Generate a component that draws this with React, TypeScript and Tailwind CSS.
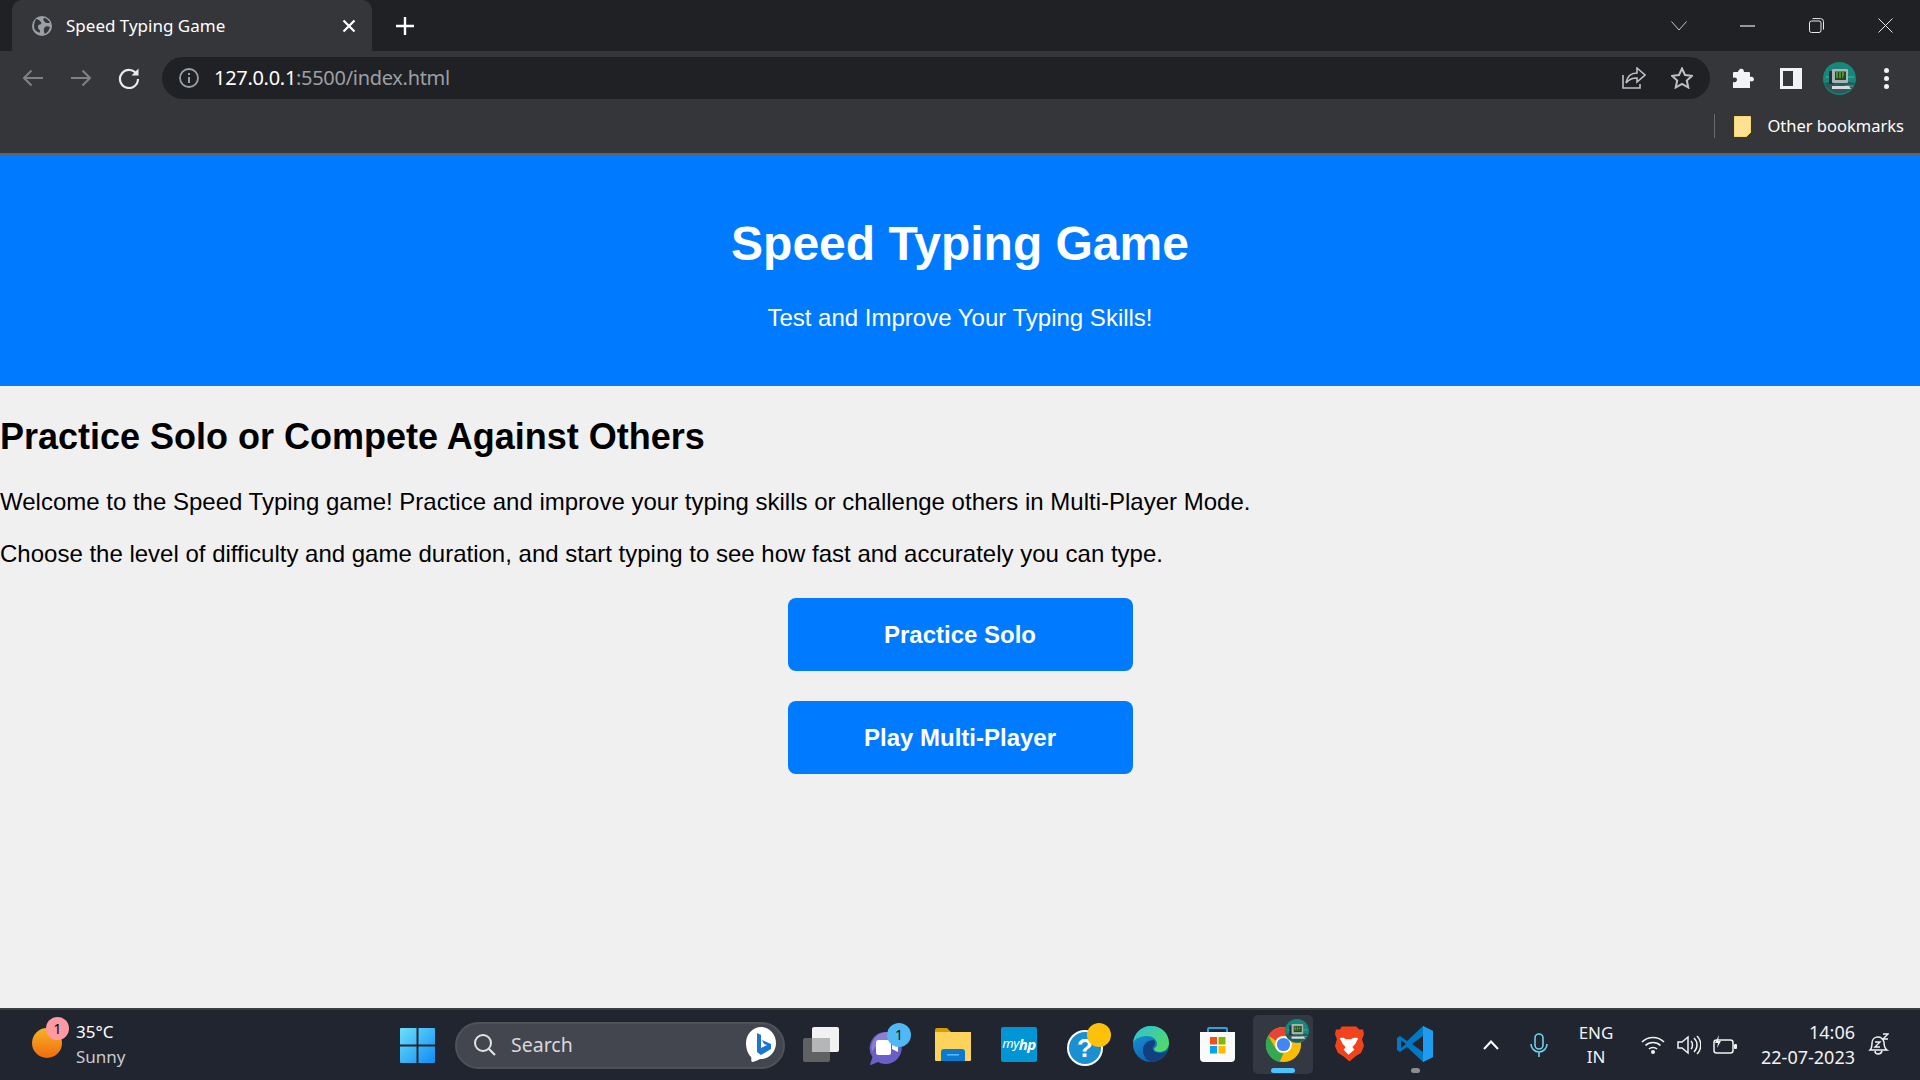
import React from "react";

const Globe = () => (
  <svg width="20" height="20" viewBox="0 0 20 20">
    <circle cx="10" cy="10" r="10" fill="#9aa0a6" />
    <path d="M4 3c2 0 3 1 4 2s2 2 1 3-3 0-3 3 2 2 2 4-1 2-2 1C3 15 2 13 2 10c0-3 1-5 2-7zM12 2c2 0 5 2 6 5h-3c-2 0-2-1-3-2s-1-2 0-3zM13 11c1-1 3-1 5 0-1 3-2 5-5 7-1-2-2-5 0-7z" fill="#35363a" />
  </svg>
);

const ChromeLogo = () => (
  <svg width="37" height="37" viewBox="0 0 38 38">
    <circle cx="19" cy="19" r="18" fill="#fbbc04" />
    <path d="M19 1a18 18 0 0 1 15.6 9H19a9 9 0 0 0-8 5L3.4 10A18 18 0 0 1 19 1z" fill="#ea4335" />
    <path d="M3.4 10 11 23a9 9 0 0 0 8 5l-4 9A18 18 0 0 1 3.4 10z" fill="#34a853" />
    <circle cx="19" cy="19" r="8.6" fill="#fff" />
    <circle cx="19" cy="19" r="6.8" fill="#4285f4" />
  </svg>
);

const Avatar = ({ size }: { size: number }) => (
  <svg width={size} height={size} viewBox="0 0 33 33">
    <circle cx="16.5" cy="16.5" r="16.500" fill="#16877a" />
    <path d="M1 21c9-2 22-2 31 0a16.5 16.5 0 0 1-31 0z" fill="#2c5a5a" />
    <path d="M3 15h6M25 15h6M22 24h8" stroke="#47b6a4" strokeWidth="1" />
    <rect x="6" y="9" width="5" height="13" fill="#22323a" />
    <rect x="9" y="7" width="16" height="14" rx="1" fill="#a8b3b8" />
    <rect x="12" y="9.5" width="11" height="8.5" fill="#1f4d1a" />
    <path d="M13 11h9M13 13h9M13 15h7" stroke="#8fdc4a" strokeWidth=".9" strokeDasharray="2 1" />
    <path d="M9 24h17l2 3H9z" fill="#d5dadc" />
  </svg>
);

const Win = () => (
  <svg width="35" height="35" viewBox="0 0 35 35">
    <defs>
      <linearGradient id="wg" x1="0" y1="0" x2="1" y2="1">
        <stop offset="0" stopColor="#6ce0fb" />
        <stop offset="1" stopColor="#0f8cf3" />
      </linearGradient>
    </defs>
    <path d="M1 0h15.500v16.500H0V1a1 1 0 0 1 1-1zM18.500 0H34a1 1 0 0 1 1 1v15.500H18.500zM0 18.500h16.500V35H1a1 1 0 0 1-1-1zM18.500 18.500H35V34a1 1 0 0 1-1 1H18.500z" fill="url(#wg)" />
  </svg>
);

const TaskView = () => (
  <svg width="36" height="35" viewBox="0 0 36 35">
    <rect x="0" y="11" width="27" height="24" rx="2" fill="#5f6163" />
    <rect x="9" y="0" width="27" height="25" rx="2" fill="#f2f2f2" />
    <rect x="9" y="11" width="18" height="14" fill="#b5b6b8" />
  </svg>
);

const Meet = () => (
  <svg className="ml-[4px]" width="44" height="42" viewBox="0 0 44 42">
    <path d="M19 9a16 16 0 1 1-8 30l-7 3c-1 0-1-1-.5-2l2-6A16 16 0 0 1 19 9z" fill="#6a5fc7" />
    <path d="M19 9A16 16 0 0 0 5 29c5-10 16-14 28-10A16 16 0 0 0 19 9z" fill="#8a7fd0" />
    <rect x="9" y="17" width="15" height="15" rx="2.500" fill="#fff" />
    <path d="m25 22 6-3v10l-6-3z" fill="#fff" />
    <circle cx="32" cy="12" r="12" fill="#4fb8f5" />
    <text x="32" y="17" textAnchor="middle" fontSize="14" fill="#111" fontFamily="'Noto Sans', sans-serif">1</text>
  </svg>
);

const Folder = () => (
  <svg width="36" height="33" viewBox="0 0 36 33">
    <path d="M0 2a2 2 0 0 1 2-2h10l4 4H0z" fill="#d99a07" />
    <path d="M0 4h36v28a1 1 0 0 1-1 1H1a1 1 0 0 1-1-1z" fill="#fdd35b" />
    <path d="M6 33V24a3 3 0 0 1 3-3h18a3 3 0 0 1 3 3v9z" fill="#0b79cf" />
    <rect x="12" y="26" width="12" height="1.6" fill="#5cb5ee" />
  </svg>
);

const MyHp = () => (
  <div className="w-[36px] h-[35px] bg-[#0096d6] rounded-[2px] flex items-center justify-center text-white text-[13px] italic font-['Noto_Sans',sans-serif] tracking-[-0.5px]">
    my<span className="font-bold text-[15px]">hp</span>
  </div>
);

const Help = () => (
  <svg className="ml-[8px]" width="44" height="43" viewBox="0 0 44 43">
    <circle cx="18" cy="25" r="18" fill="#fff" />
    <circle cx="18" cy="25" r="16" fill="#1a8fd1" />
    <text x="18" y="34" textAnchor="middle" fontSize="26" fontWeight="700" fill="#fff" fontFamily="'Liberation Sans', sans-serif">?</text>
    <circle cx="32" cy="12" r="12" fill="#fdc10c" />
  </svg>
);

const Edge = () => (
  <svg width="36" height="36" viewBox="0 0 36 36">
    <defs>
      <linearGradient id="eg" x1="0" y1="0" x2="1" y2="1">
        <stop offset="0" stopColor="#2fc1d6" />
        <stop offset="1" stopColor="#58dd55" />
      </linearGradient>
      <linearGradient id="eb" x1="0" y1="0" x2="0.6" y2="1">
        <stop offset="0" stopColor="#1a9be0" />
        <stop offset="1" stopColor="#0c5ea8" />
      </linearGradient>
    </defs>
    <circle cx="18" cy="18" r="18" fill="url(#eb)" />
    <path d="M0 17C1 7 9 0 18 0c10 0 18 7 18 17 0 5-4 9-9 9-4 0-6-1-6-3 0-1 3-2 3-5 0-5-5-8-10-8C8 10 2 12 0 17z" fill="url(#eg)" />
    <path d="M10 24c0-6 5-10 11-10 1 2 2 4-1 7-2 3 3 7 9 6 2 0 3-1 5-2-3 6-9 11-16 11-5-2-8-7-8-12z" fill="#123f7e" />
  </svg>
);

const Store = () => (
  <svg width="35" height="35" viewBox="0 0 35 35">
    <path d="M8 6V2a1 1 0 0 1 1-1h17a1 1 0 0 1 1 1v4" fill="none" stroke="#27a3e8" strokeWidth="2" />
    <path d="M0 5h35v26a4 4 0 0 1-4 4H4a4 4 0 0 1-4-4z" fill="#fafafa" />
    <rect x="10" y="10" width="7" height="7.500" fill="#f25022" />
    <rect x="18.500" y="10" width="7" height="7.500" fill="#7fba00" />
    <rect x="10" y="19" width="7" height="7.500" fill="#00a4ef" />
    <rect x="18.500" y="19" width="7" height="7.500" fill="#ffb900" />
  </svg>
);

const Brave = () => (
  <svg width="30" height="36" viewBox="0 0 31 36">
    <path d="M8 0h15l3 3 4 0 1 5-2 5 2 7-3 7-6 4-6 5-6-5-6-4-3-7 2-7-2-5 1-5 4 0z" fill="#f1441d" />
    <path d="M6 12c3-1 5 0 6 1l3 0 3 0c1-1 3-2 7-1l-3 6-3 3 2 3-6 5-5-5 2-3-3-3z" fill="#fff" />
  </svg>
);

const VSCode = () => (
  <svg width="36" height="36" viewBox="0 0 36 36">
    <path d="M26 0 36 5v26l-10 5L10 21l-7 5-3-2v-12l3-2 7 5z" fill="#0078c4" />
    <path d="M26 0 36 5v26l-10 5z" fill="#1f9cf0" />
    <path d="M26 10 15 18l11 8z" fill="#202530" />
    <path d="M4 14l5 4-5 4z" fill="#202530" />
  </svg>
);

const Bing = () => (
  <svg width="30" height="36" viewBox="0 0 30 36">
    <path d="M15 0c8 0 15 7 15 16s-7 16-15 16c-2 0-4 2-8 3-3 0-1-3-2-5C2 27 0 22 0 16 0 7 7 0 15 0z" fill="#fff" />
    <path d="M11 6l4 2v13l6-3-3-1-2-4 9 4v5l-10 6-4-3z" fill="#1b76d2" />
  </svg>
);

const Slot = ({ children, active }: { children: React.ReactNode; active?: boolean }) => (
  <div className="w-[66px] h-[70px] flex items-center justify-center">
    <div className={`w-[60px] h-[59px] -mt-[2px] rounded-[5px] flex items-center justify-center ${active ? "bg-[#343842]" : ""}`}>{children}</div>
  </div>
);

const ChromeBar = () => (
  <div className="shrink-0 font-['Noto_Sans',sans-serif] text-white">
    <div className="h-[51px] bg-[#202124] flex items-end">
      <div className="ml-[12px] w-[360px] h-[51px] bg-[#35363a] rounded-t-[10px] flex items-center pl-[20px] pr-[16px]">
        <Globe />
        <span className="ml-[14px] text-[17px] flex-1">Speed Typing Game</span>
        <svg width="14" height="14" viewBox="0 0 14 14"><path d="M1.500 1.500l11 11M12.500 1.500l-11 11" stroke="#fff" strokeWidth="2.200" /></svg>
      </div>
      <div className="ml-[23px] h-[51px] flex items-center">
        <svg width="20" height="20" viewBox="0 0 20 20"><path d="M10 1v18M1 10h18" stroke="#fff" strokeWidth="2.400" /></svg>
      </div>
      <div className="flex-1" />
      <div className="h-[51px] flex items-center">
        <svg width="16" height="10" viewBox="0 0 16 10"><path d="M.5.5 8 9 15.500.5" fill="none" stroke="#c8c8c8" strokeWidth="1" /></svg>
        <svg className="ml-[53px]" width="15" height="2" viewBox="0 0 15 2"><path d="M0 1h15" stroke="#e8e8e8" strokeWidth="1.200" /></svg>
        <svg className="ml-[54px]" width="15" height="15" viewBox="0 0 15 15"><rect x=".5" y="3" width="11.500" height="11.500" rx="2" fill="none" stroke="#e8e8e8" /><path d="M3.500 .6h8a3 3 0 0 1 3 3v8" fill="none" stroke="#e8e8e8" /></svg>
        <svg className="ml-[54px] mr-[27px]" width="15" height="15" viewBox="0 0 15 15"><path d="M.5.5l14 14M14.500.5l-14 14" stroke="#e8e8e8" strokeWidth="1" /></svg>
      </div>
    </div>
    <div className="h-[104px] bg-[#35363a] border-b-[2px] border-b-[#5f6368]">
      <div className="h-[54px] flex items-start">
        <div className="w-[162px] h-[54px] flex items-center">
          <svg className="ml-[22px]" width="22" height="18" viewBox="0 0 22 18"><path d="M21 9H2M9.500 1.500 2 9l7.500 7.500" fill="none" stroke="#7f8285" strokeWidth="2" /></svg>
          <svg className="ml-[26px]" width="22" height="18" viewBox="0 0 22 18"><path d="M1 9h19M12.500 1.500 20 9l-7.500 7.500" fill="none" stroke="#7f8285" strokeWidth="2" /></svg>
          <svg className="ml-[26px]" width="22" height="22" viewBox="0 0 22 22"><path d="M18.500 7A9 9 0 1 0 20 12" fill="none" stroke="#e8eaed" strokeWidth="2.200" /><path d="M20.500 1.500v7h-7z" fill="#e8eaed" /></svg>
        </div>
        <div className="mt-[6px] w-[1548px] h-[42px] rounded-full bg-[#202124] flex items-center pl-[17px] pr-[17px]">
          <svg width="20" height="20" viewBox="0 0 20 20"><circle cx="10" cy="10" r="9" fill="none" stroke="#9aa0a6" strokeWidth="1.800" /><path d="M10 9v6M10 5v2" stroke="#9aa0a6" strokeWidth="2" /></svg>
          <span className="ml-[15px] text-[20px] text-white tracking-[-0.3px]">127.0.0.1<span className="text-[#9aa0a6]">:5500/index.html</span></span>
          <div className="flex-1" />
          <svg width="24" height="22" viewBox="0 0 24 22"><path d="M15 1l8 7-8 7v-4c-5 0-8 1-11 5 1-6 5-10 11-10zM1 8v13h17v-4" fill="none" stroke="#bdc1c6" strokeWidth="1.600" /></svg>
          <svg className="ml-[25px]" width="22" height="22" viewBox="0 0 22 22"><path d="M11 1.500l3 6.500 7 .8-5.200 4.700 1.500 7L11 17l-6.300 3.500 1.500-7L1 8.800 8 8z" fill="none" stroke="#bdc1c6" strokeWidth="2" /></svg>
        </div>
        <div className="mt-[6px] h-[42px] flex items-center">
          <svg className="ml-[22px]" width="22" height="21" viewBox="0 0 22 21"><path d="M8 1c2-1 4 0 4 3h5a1 1 0 0 1 1 1v4c3-1 4 1 4 2.500S20 14 18 13v7H1v-6c3 1 4-1 4-2.500S3 9 1 10V5a1 1 0 0 1 1-1h4c0-1 1-2 2-3z" fill="#f1f3f4" /></svg>
          <svg className="ml-[26px]" width="22" height="21" viewBox="0 0 22 21"><path d="M0 0h22v21H0z" fill="#f1f3f4" /><rect x="3" y="3" width="10" height="15" fill="#35363a" /></svg>
          <div className="ml-[21px]"><Avatar size={33} /></div>
          <div className="ml-[28px] flex flex-col gap-[3px]">
            <span className="w-[5px] h-[5px] rounded-full bg-[#f1f3f4]" />
            <span className="w-[5px] h-[5px] rounded-full bg-[#f1f3f4]" />
            <span className="w-[5px] h-[5px] rounded-full bg-[#f1f3f4]" />
          </div>
        </div>
      </div>
      <div className="h-[42px] flex items-center justify-end pr-[16px]">
        <div className="w-[1px] h-[24px] bg-[#6a6c70] mr-[19px]" />
        <svg width="17" height="21" viewBox="0 0 17 21"><path d="M0 1a1 1 0 0 1 1-1h15a1 1 0 0 1 1 1v15l-5 5H1a1 1 0 0 1-1-1z" fill="#fde293" stroke="#f0c94d" /></svg>
        <span className="ml-[16px] text-[16.5px] leading-[24px]">Other bookmarks</span>
      </div>
    </div>
  </div>
);

const Page = () => (
  <div className="flex-1 bg-[#f0f0f0] font-['Liberation_Sans',sans-serif] text-black min-h-0">
    <header className="bg-[#007bff] text-white text-center pt-[61px] h-[231px]">
      <h1 className="text-[48px] leading-[56px] font-bold">Speed Typing Game</h1>
      <p className="text-[24px] leading-[28px] mt-[32px]">Test and Improve Your Typing Skills!</p>
    </header>
    <main className="pt-[30px]">
      <h2 className="text-[36px] leading-[42px] font-bold">Practice Solo or Compete Against Others</h2>
      <p className="text-[24px] leading-[28px] mt-[30px]">Welcome to the Speed Typing game! Practice and improve your typing skills or challenge others in Multi-Player Mode.</p>
      <p className="text-[24px] leading-[28px] mt-[24px]">Choose the level of difficulty and game duration, and start typing to see how fast and accurately you can type.</p>
      <div className="mt-[30px] flex flex-col items-center gap-[30px]">
        <button className="w-[345px] h-[73px] bg-[#007bff] rounded-[8px] text-white text-[24px] font-bold">Practice Solo</button>
        <button className="w-[345px] h-[73px] bg-[#007bff] rounded-[8px] text-white text-[24px] font-bold">Play Multi-Player</button>
      </div>
    </main>
  </div>
);

const Taskbar = () => (
  <div className="h-[72px] shrink-0 bg-[#202530] border-t-[2px] border-t-[#3a3d42] flex items-center text-white font-['Noto_Sans',sans-serif]">
    <div className="w-[400px] h-[70px] flex items-center pl-[32px]">
      <div className="relative w-[30px] h-[30px] rounded-full bg-gradient-to-b from-[#f5b324] to-[#ef6a0e] mb-[4px]">
        <div className="absolute -top-[11px] left-[14px] w-[23px] h-[23px] rounded-full bg-[#ff99a4] text-black text-[14px] flex items-center justify-center">1</div>
      </div>
      <div className="ml-[14px] flex flex-col text-[17px] leading-[25px] -mt-[2px]">
        <span className="text-white">35°C</span>
        <span className="text-[#c9cbce]">Sunny</span>
      </div>
    </div>
    <Win />
    <div className="ml-[20px] w-[330px] h-[47px] rounded-full bg-[#43464e] border-[2px] border-[#4f525a] flex items-center pl-[16px] pr-[7px]">
      <svg width="24" height="24" viewBox="0 0 24 24"><circle cx="10" cy="10" r="8" fill="none" stroke="#e4e4e4" strokeWidth="2" /><path d="M16 16l6 6" stroke="#e4e4e4" strokeWidth="2.200" /></svg>
      <span className="ml-[14px] text-[19.500px] text-[#d8d9db] flex-1">Search</span>
      <Bing />
    </div>
    <div className="ml-[3px] flex">
      <Slot><TaskView /></Slot>
      <Slot><Meet /></Slot>
      <Slot><Folder /></Slot>
      <Slot><MyHp /></Slot>
      <Slot><Help /></Slot>
      <Slot><Edge /></Slot>
      <Slot><Store /></Slot>
      <div className="relative">
        <Slot active><ChromeLogo /></Slot>
        <div className="absolute top-[9px] right-[7px]"><Avatar size={24} /></div>
        <div className="absolute bottom-[7px] left-[21px] w-[24px] h-[5px] rounded-full bg-[#4cc2ff]" />
      </div>
      <Slot><Brave /></Slot>
      <div className="relative">
        <Slot><VSCode /></Slot>
        <div className="absolute bottom-[7px] left-[29px] w-[9px] h-[5px] rounded-full bg-[#8a8c90]" />
      </div>
    </div>
    <div className="flex-1" />
    <div className="flex items-center pr-[31px]">
      <svg width="16" height="10" viewBox="0 0 16 10"><path d="M1 9l7-7.500L15 9" fill="none" stroke="#fff" strokeWidth="2" /></svg>
      <svg className="ml-[31px]" width="18" height="24" viewBox="0 0 18 24"><rect x="5" y="1" width="8" height="15" rx="4" fill="none" stroke="#72d0ee" strokeWidth="1.600" /><path d="M1 11a8 8 0 0 0 16 0M9 19v5" fill="none" stroke="#72d0ee" strokeWidth="1.600" /></svg>
      <div className="ml-[31px] w-[34px] flex flex-col items-center leading-[24px] text-[17px] text-[#f2f2f2]">
        <span>ENG</span>
        <span>IN</span>
      </div>
      <svg className="ml-[28px]" width="24" height="18" viewBox="0 0 24 18"><path d="M1 6c6-6 16-6 22 0M4.500 9.500c4-4 11-4 15 0M8 13c2-2 6-2 8 0" fill="none" stroke="#f2f2f2" strokeWidth="1.700" /><circle cx="12" cy="16" r="2" fill="#f2f2f2" /></svg>
      <svg className="ml-[12px]" width="24" height="20" viewBox="0 0 24 20"><path d="M1 7h4l6-5v16l-6-5H1z" fill="none" stroke="#f2f2f2" strokeWidth="1.500" /><path d="M14 6c2 2 2 6 0 8M17 3c4 4 4 10 0 14M20 1c5 5 5 13 0 18" fill="none" stroke="#f2f2f2" strokeWidth="1.500" /></svg>
      <svg className="ml-[12px]" width="24" height="20" viewBox="0 0 24 20"><rect x="1" y="5" width="19" height="13" rx="2.500" fill="none" stroke="#f2f2f2" strokeWidth="1.500" /><rect x="21" y="9" width="3" height="5" rx="1" fill="#f2f2f2" /><path d="M6 0 2 8h3l-1 5 4-7H5z" fill="#f2f2f2" /></svg>
      <div className="ml-[18px] w-[100px] flex flex-col items-end leading-[25px] text-[18px] text-[#f2f2f2] whitespace-nowrap">
        <span>14:06</span>
        <span>22-07-2023</span>
      </div>
      <svg className="ml-[13px]" width="21" height="24" viewBox="0 0 21 24"><path d="M2 17c2-2 2-4 2-7 0-4 3-6 6-6s5 2 6 5c0 3 0 6 3 8zM7 18c0 4 6 4 7 0" fill="none" stroke="#f2f2f2" strokeWidth="1.500" /><path d="M7 9h5l-5 5h5M15 1h5l-5 5h5" fill="none" stroke="#f2f2f2" strokeWidth="1.400" /></svg>
    </div>
  </div>
);

export default function App() {
  return (
    <div className="w-[1920px] h-[1080px] flex flex-col overflow-hidden">
      <ChromeBar />
      <Page />
      <Taskbar />
    </div>
  );
}
